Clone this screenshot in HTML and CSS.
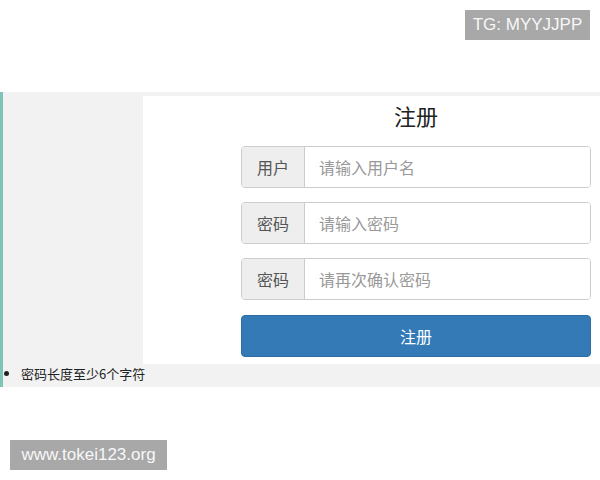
FILE: index.html
```html
<!DOCTYPE html>
<html lang="zh">
<head>
<meta charset="utf-8">
<title>注册</title>
<link rel="stylesheet" href="styles.css">
</head>
<body>
<div class="top"></div>
<section class="main">
  <div class="row">
    <div class="side"></div>
    <div class="card">
      <div class="form">
        <h2 class="title">注册</h2>
        <div class="group">
          <span class="addon">用户</span>
          <input class="field" type="text" placeholder="请输入用户名">
        </div>
        <div class="group">
          <span class="addon">密码</span>
          <input class="field" type="password" placeholder="请输入密码">
        </div>
        <div class="group">
          <span class="addon">密码</span>
          <input class="field" type="password" placeholder="请再次确认密码">
        </div>
        <button class="btn" type="button">注册</button>
      </div>
    </div>
  </div>
  <ul class="tips">
    <li>密码长度至少6个字符</li>
  </ul>
</section>
<div class="badge badge-tg">TG: MYYJJPP</div>
<div class="badge badge-site">www.tokei123.org</div>
</body>
</html>
```
FILE: styles.css
```css
* { box-sizing: border-box; }
html, body { margin: 0; padding: 0; background: #fff; }
body {
  font-family: "Noto Sans CJK SC", "Liberation Sans", sans-serif;
  color: #333;
  width: 600px;
  height: 480px;
  position: relative;
  overflow: hidden;
}
.top { height: 92px; }
.main {
  background: #f2f2f2;
  border-left: 3px solid #7ec4b8;
  padding-top: 4px;
}
.row { display: flex; }
.side { width: 140px; flex: none; }
.card {
  flex: 1;
  background: #fff;
  padding: 0 9px 7px 98px;
}
.form { display: flex; flex-direction: column; }
.title {
  margin: 0;
  height: 50px;
  padding-top: 5px;
  text-align: center;
  font-size: 22px;
  font-weight: normal;
  line-height: 28px;
  color: #222;
}
.group {
  display: flex;
  height: 42px;
  margin-bottom: 14px;
  border: 1px solid #ccc;
  border-radius: 4px;
  overflow: hidden;
}
.group:nth-of-type(3) { margin-bottom: 15px; }
.addon {
  width: 63px;
  flex: none;
  background: #eee;
  border-right: 1px solid #ccc;
  color: #555;
  font-size: 16px;
  display: flex;
  align-items: center;
  justify-content: center;
}
.field {
  flex: 1;
  border: 0;
  outline: 0;
  padding: 0 14px;
  font-family: inherit;
  font-size: 16px;
  color: #555;
  background: #fff;
}
.field::placeholder { color: #999; }
.btn {
  height: 42px;
  border: 1px solid #2e6da4;
  border-radius: 4px;
  background: #337ab7;
  color: #fff;
  font-family: inherit;
  font-size: 16px;
}
.tips {
  margin: 0;
  padding: 0 0 0 18px;
  height: 23px;
  font-size: 13px;
  line-height: 20px;
  color: #222;
}
.badge {
  position: absolute;
  background: #a8a8a8;
  color: #f7f7f7;
  font-family: "Liberation Sans", Arial, sans-serif;
  font-size: 17px;
  line-height: 30px;
  height: 30px;
  padding: 0;
}
.badge-tg { top: 10px; right: 10px; width: 125px; text-align: center; }
.badge-site { top: 440px; left: 10px; width: 157px; text-align: center; }
```
